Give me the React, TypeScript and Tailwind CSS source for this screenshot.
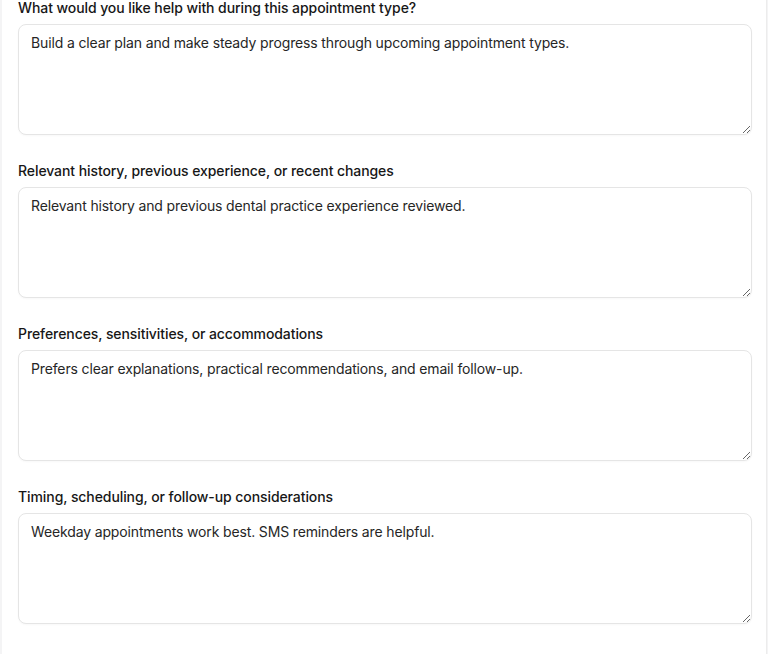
import React, { useState } from 'react';

const fields = [
  {
    key: 'help',
    label: 'What would you like help with during this appointment type?',
    value: 'Build a clear plan and make steady progress through upcoming appointment types.',
  },
  {
    key: 'history',
    label: 'Relevant history, previous experience, or recent changes',
    value: 'Relevant history and previous dental practice experience reviewed.',
  },
  {
    key: 'preferences',
    label: 'Preferences, sensitivities, or accommodations',
    value: 'Prefers clear explanations, practical recommendations, and email follow-up.',
  },
  {
    key: 'timing',
    label: 'Timing, scheduling, or follow-up considerations',
    value: 'Weekday appointments work best. SMS reminders are helpful.',
  },
];

export default function App() {
  const [values, setValues] = useState<Record<string, string>>(
    Object.fromEntries(fields.map((f) => [f.key, f.value]))
  );

  return (
    <div
      className="h-screen overflow-hidden bg-[#f4f4f5]"
      style={{ fontFamily: 'Inter, "Noto Sans", sans-serif' }}
    >
      <div className="ml-[2px] mr-[1px] min-h-[720px] border-r border-[#ececec] bg-white pl-4 pr-[14px]">
        <div className="-mt-[2px] flex flex-col gap-[26px]">
          {fields.map((f) => (
            <div key={f.key} className="flex flex-col">
              <label
                htmlFor={f.key}
                className="mb-1.5 text-sm leading-5 font-medium tracking-[-0.006em] text-[#171717]"
              >
                {f.label}
              </label>
              <textarea
                id={f.key}
                value={values[f.key]}
                onChange={(e) => setValues({ ...values, [f.key]: e.target.value })}
                className="h-[111px] w-full rounded-lg border border-[#e5e5e5] bg-white px-3 py-2 text-sm leading-5 tracking-[-0.01em] text-[#262626] shadow-[0_1px_2px_rgba(0,0,0,0.03)] outline-none"
              />
            </div>
          ))}
        </div>
      </div>
    </div>
  );
}
